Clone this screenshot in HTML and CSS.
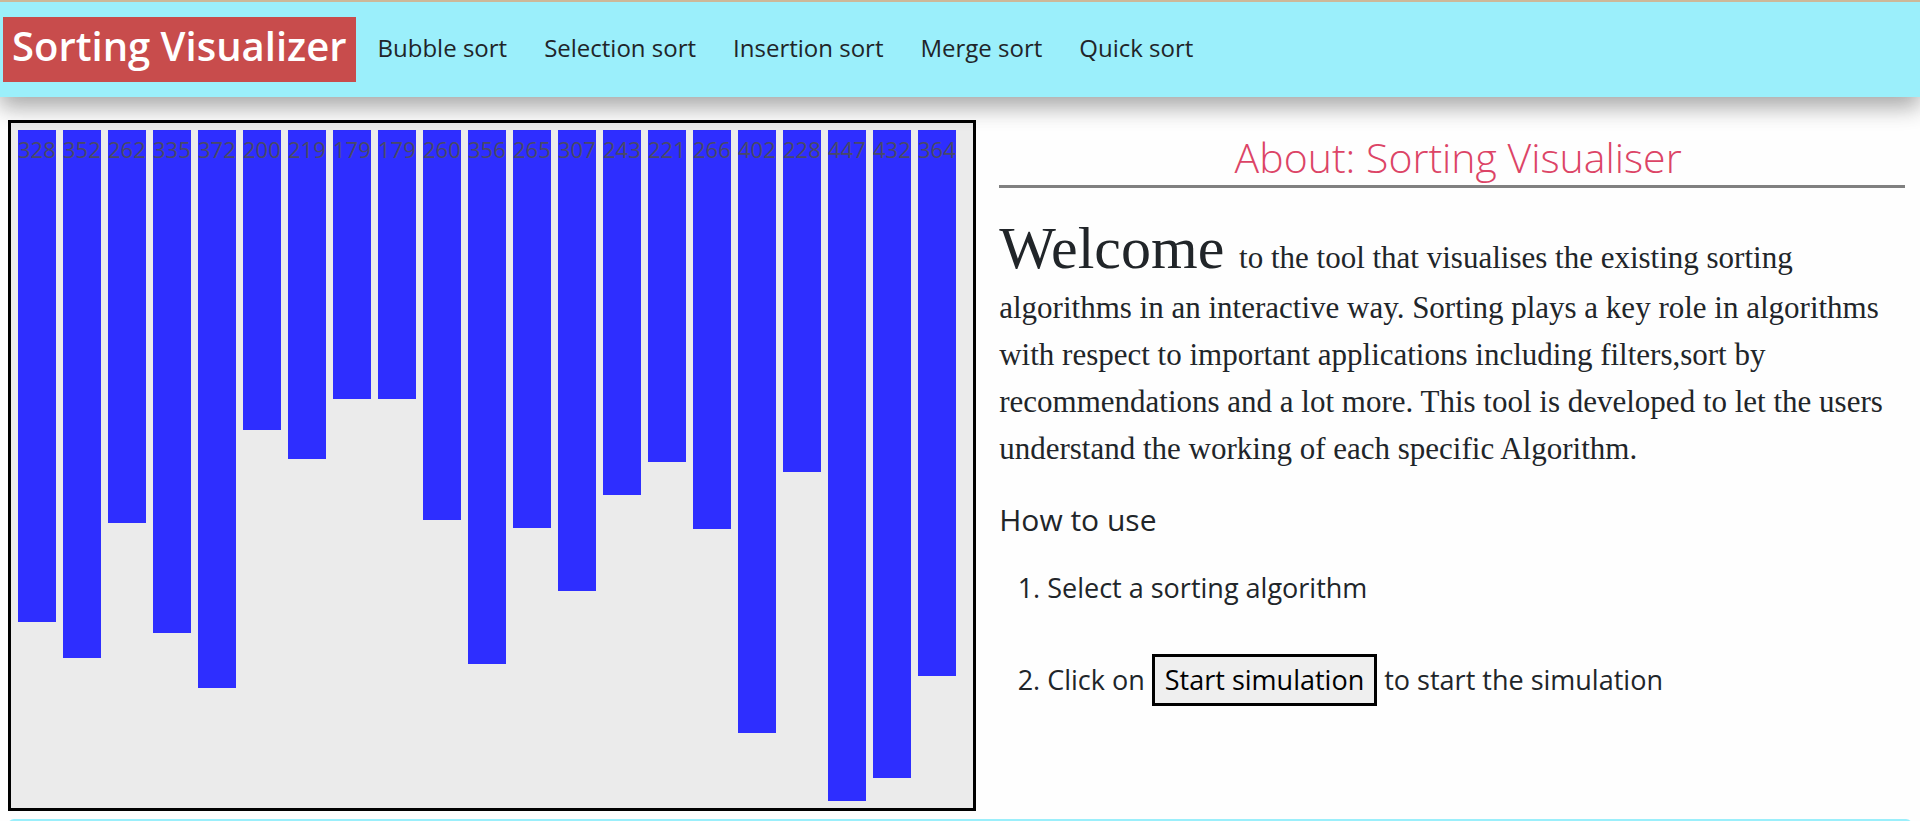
FILE: index.html
```html
<!DOCTYPE html>
<html lang="en">
<head>
<meta charset="utf-8">
<title>Sorting Visualizer</title>
<link rel="stylesheet" href="styles.css">
</head>
<body>
<header class="navbar">
  <a class="brand" href="#">Sorting Visualizer</a>
  <nav class="links">
    <a href="#bubble">Bubble sort</a>
    <a href="#selection">Selection sort</a>
    <a href="#insertion">Insertion sort</a>
    <a href="#merge">Merge sort</a>
    <a href="#quick">Quick sort</a>
  </nav>
</header>
<main class="content">
  <section class="chart" aria-label="Array values">
    <div class="bar" style="height:492px">328</div>
    <div class="bar" style="height:528px">352</div>
    <div class="bar" style="height:393px">262</div>
    <div class="bar" style="height:503px">335</div>
    <div class="bar" style="height:558px">372</div>
    <div class="bar" style="height:300px">200</div>
    <div class="bar" style="height:329px">219</div>
    <div class="bar" style="height:269px">179</div>
    <div class="bar" style="height:269px">179</div>
    <div class="bar" style="height:390px">260</div>
    <div class="bar" style="height:534px">356</div>
    <div class="bar" style="height:398px">265</div>
    <div class="bar" style="height:461px">307</div>
    <div class="bar" style="height:365px">243</div>
    <div class="bar" style="height:332px">221</div>
    <div class="bar" style="height:399px">266</div>
    <div class="bar" style="height:603px">402</div>
    <div class="bar" style="height:342px">228</div>
    <div class="bar" style="height:671px">447</div>
    <div class="bar" style="height:648px">432</div>
    <div class="bar" style="height:546px">364</div>
  </section>
  <section class="about">
    <h1 class="title">About: Sorting Visualiser</h1>
    <p class="intro"><span class="welcome">Welcome</span> to the tool that visualises the existing sorting algorithms in an interactive way. Sorting plays a key role in algorithms with respect to important applications including filters,sort by recommendations and a lot more. This tool is developed to let the users understand the working of each specific Algorithm.</p>
    <h2 class="subtitle">How to use</h2>
    <ol class="steps">
      <li>Select a sorting algorithm</li>
      <li>Click on <button class="start" type="button">Start simulation</button> to start the simulation</li>
    </ol>
  </section>
</main>
<footer class="footer"></footer>
</body>
</html>
```
FILE: styles.css
```css
* {
  box-sizing: border-box;
}

body {
  display: flex;
  flex-direction: column;
  height: 100vh;
  margin: 0;
  overflow: hidden;
  background: #fefefe;
  color: #212529;
  font-family: "Open Sans", "Noto Sans", sans-serif;
}

.navbar {
  position: relative;
  display: flex;
  flex-shrink: 0;
  align-items: center;
  gap: 22px;
  padding: 15px 3px;
  border-top: 2px solid #cdb899;
  background: #9beffb;
  box-shadow: 0 10px 20px rgba(0, 0, 0, 0.2), 0 8px 25px rgba(0, 0, 0, 0.19);
}

.brand {
  padding: 0 9px 7px;
  background: #c84c4c;
  color: #fff;
  font-size: 40px;
  font-weight: 600;
  line-height: 58px;
  text-decoration: none;
}

.links {
  display: flex;
  gap: 37px;
  padding-bottom: 4px;
}

.links a {
  color: #212529;
  font-size: 24px;
  line-height: 36px;
  text-decoration: none;
}

.content {
  display: grid;
  flex-shrink: 0;
  grid-template-columns: minmax(0, 31fr) minmax(0, 29fr);
  gap: 23px;
  padding: 23px 15px 8px 8px;
}

.chart {
  display: flex;
  align-items: flex-start;
  gap: 7px;
  padding: 7px;
  border: 3px solid #000;
  background: #ebebeb;
}

.bar {
  flex: 0 0 38px;
  background: #2e2eff;
  color: #4a4a66;
  font-size: 22px;
  line-height: 38px;
}

.about {
  padding-top: 10px;
}

.title {
  margin: 0 0 24px;
  padding-left: 12px;
  border-bottom: 3px solid #808080;
  color: #dc4466;
  font-size: 41px;
  font-weight: 300;
  line-height: 55px;
  text-align: center;
}

.intro {
  margin: 0 0 24px;
  font-family: "Liberation Serif", "Times New Roman", serif;
  font-size: 31px;
  line-height: 47px;
}

.welcome {
  margin-right: 7px;
  font-size: 60px;
  line-height: 72px;
}

.subtitle {
  margin: 0;
  font-size: 30px;
  font-weight: 400;
  line-height: 48px;
}

.steps {
  display: grid;
  gap: 44px;
  margin: 22px 0 0;
  padding-left: 48px;
  font-size: 27px;
  line-height: 44px;
}

.start {
  padding: 0 10px;
  border: 3px solid #000;
  background: #efefef;
  color: #000;
  font: inherit;
  line-height: 46px;
}

.footer {
  flex-shrink: 0;
  margin: 0 8px;
  padding: 20px;
  border-radius: 6px;
  background: #9beffb;
}
```
